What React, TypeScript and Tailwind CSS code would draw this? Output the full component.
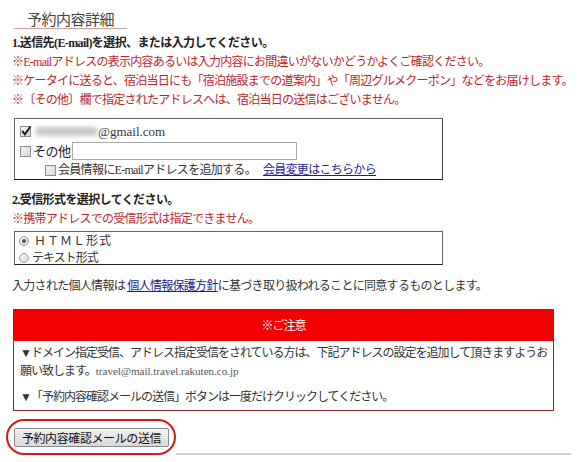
import React from "react";

const F = { fontFamily: '"Liberation Serif", "Noto Sans CJK JP", serif' };
const G = { fontFamily: '"Noto Sans CJK JP", "Noto Sans", sans-serif' };

function Check({ checked }: { checked?: boolean }) {
  return (
    <span className="relative inline-block w-[11px] h-[11px] shrink-0 border border-[#8e8e8e] bg-gradient-to-br from-[#f6f6f6] to-[#d6d6d6]">
      {checked && (
        <svg viewBox="0 0 11 11" className="absolute left-[-1px] top-[-2px] w-[12px] h-[12px]">
          <path d="M2 5.5 L4.5 8.5 L9.5 1.5" fill="none" stroke="#222" strokeWidth="1.8" />
        </svg>
      )}
    </span>
  );
}

function Radio({ checked }: { checked?: boolean }) {
  return (
    <span className="flex items-center justify-center w-[10px] h-[10px] shrink-0 rounded-full border border-[#9a9a9a] bg-gradient-to-br from-[#f6f6f6] to-[#d8d8d8]">
      {checked && <span className="w-[4px] h-[4px] rounded-full bg-[#555]" />}
    </span>
  );
}

export default function App() {
  return (
    <div className="w-[580px] h-[462px] bg-white text-[#222] pl-[12px] pt-[8px] overflow-hidden" style={F}>
      <div className="ml-[2px] w-[113px] h-[21px] border-b border-[#c9a2a2] pl-[13px] text-[15px] leading-[21px] text-[#444] tracking-[-0.5px]" style={G}>
        予約内容詳細
      </div>

      <div className="mt-[5px] text-[12px] leading-[19px] font-bold tracking-[-0.6px]">
        1.送信先(E-mail)を選択、または入力してください。
      </div>
      <div className="text-[12px] leading-[19px] text-[#b8262c] tracking-[-0.75px] whitespace-nowrap">
        <div>※E-mailアドレスの表示内容あるいは入力内容にお間違いがないかどうかよくご確認ください。</div>
        <div>※ケータイに送ると、宿泊当日にも「宿泊施設までの道案内」や「周辺グルメクーポン」などをお届けします。</div>
        <div>※〔その他〕欄で指定されたアドレスへは、宿泊当日の送信はございません。</div>
      </div>

      <div className="mt-[8px] ml-[2px] w-[429px] h-[62px] border border-[#666] border-b-[#111] border-r-[#444] pt-[3px] pl-[5px] text-[12px]">
        <div className="h-[19px] flex items-center">
          <Check checked />
          <span className="ml-[4px] w-[63px] h-[9px] rounded-full bg-[#c8c8c8] blur-[2px]" />
          <span className="text-[13px] text-[#333]">@gmail.com</span>
        </div>
        <div className="h-[20px] flex items-center">
          <Check />
          <span className="ml-[2px] tracking-[-0.5px] text-[13px]" style={G}>その他</span>
          <span className="ml-[1px] w-[225px] h-[18px] border border-[#aaa] bg-white" />
        </div>
        <div className="h-[18px] flex items-center pl-[25px] tracking-[-0.7px] whitespace-nowrap">
          <Check />
          <span className="ml-[2px] text-[#333]">会員情報にE-mailアドレスを追加する。</span>
          <span className="ml-[7px] text-[#1c1c8c] underline">会員変更はこちらから</span>
        </div>
      </div>

      <div className="mt-[11px] text-[12px] leading-[19px] font-bold tracking-[-0.6px]">
        2.受信形式を選択してください。
      </div>
      <div className="text-[12px] leading-[19px] text-[#b8262c] tracking-[-0.75px]">
        ※携帯アドレスでの受信形式は指定できません。
      </div>
      <div className="mt-[2px] ml-[2px] w-[429px] h-[34px] border border-[#666] border-b-[#222] overflow-hidden pl-[4px] text-[12px]">
        <div className="h-[17px] flex items-center">
          <Radio checked />
          <span className="ml-[5px] tracking-[1px] text-[#333]">ＨＴＭＬ形式</span>
        </div>
        <div className="h-[17px] flex items-center">
          <Radio />
          <span className="ml-[3px] tracking-[-1px] text-[#333]">テキスト形式</span>
        </div>
      </div>

      <div className="mt-[12px] text-[12px] leading-[19px] tracking-[-0.7px] text-[#333] whitespace-nowrap">
        入力された個人情報は <span className="text-[#1c1c8c] underline">個人情報保護方針</span>に基づき取り扱われることに同意するものとします。
      </div>

      <div className="mt-[13px] ml-[1px] w-[541px] border border-[#9b2424] text-[12px]">
        <div className="h-[31px] bg-[#f40000] text-white flex items-center justify-center tracking-[-1px]">※ご注意</div>
        <div className="pt-[3px] pb-[4px] pl-[6px] leading-[18px] text-[#333] tracking-[-1px] whitespace-nowrap">
          <div>▼ドメイン指定受信、アドレス指定受信をされている方は、下記アドレスの設定を追加して頂きますようお</div>
          <div>
            願い致します。<span className="text-[11px] tracking-[0px] text-[#555]">travel@mail.travel.rakuten.co.jp</span>
          </div>
          <div className="mt-[8px]">▼「予約内容確認メールの送信」ボタンは一度だけクリックしてください。</div>
        </div>
      </div>

      <div className="mt-[8px] flex items-end">
        <div className="ml-[-6px] w-[170px] h-[36px] border-2 border-[#d81818] rounded-[18px] pl-[6px] pt-[7px]">
          <div className="w-[155px] h-[19px] border border-[#8a8a8a] rounded-[2px] bg-gradient-to-b from-[#f2f2f2] to-[#d9d9d9] flex items-center justify-center text-[12px] tracking-[-0.4px] text-[#111]" style={G}>
            予約内容確認メールの送信
          </div>
        </div>
        <div className="w-[395px] h-[2px] bg-[#cfcfcf]" />
      </div>
    </div>
  );
}
